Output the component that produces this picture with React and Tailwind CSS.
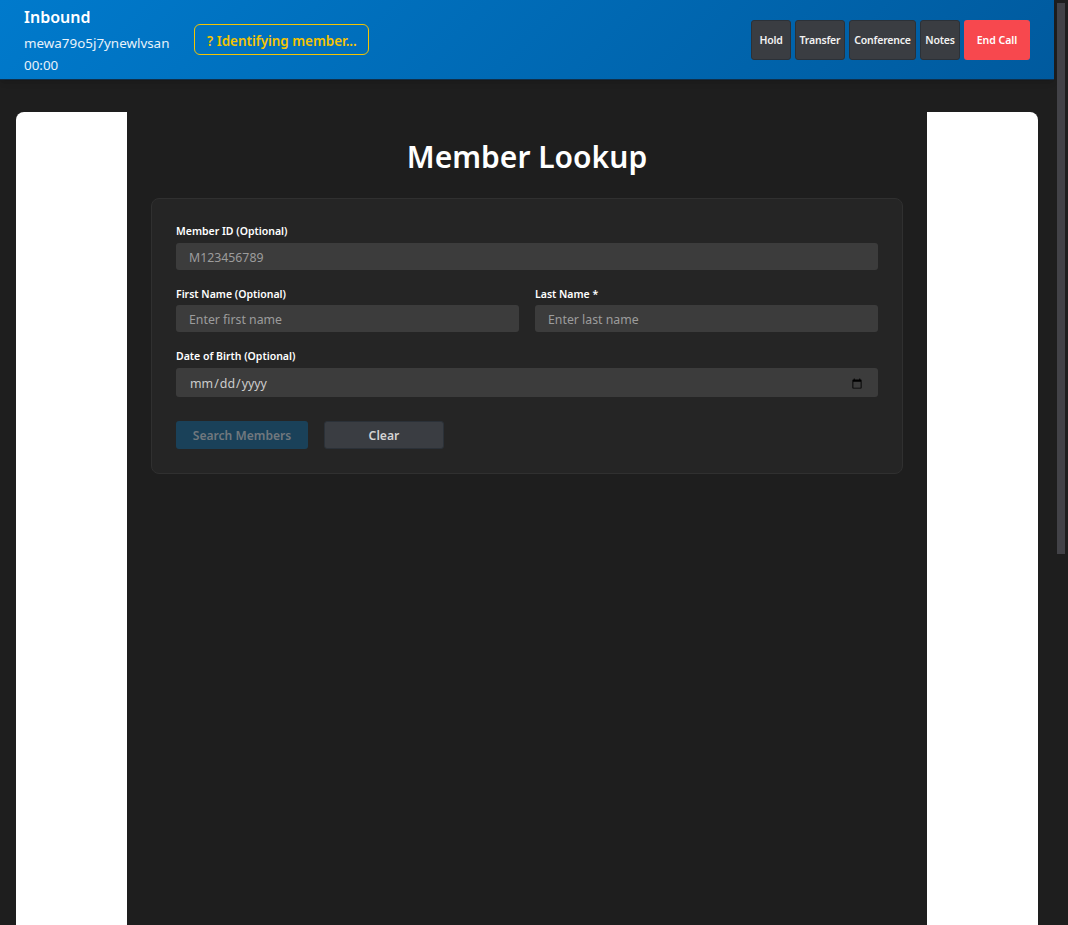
function CallButton({ children, danger, className }) {
  if (danger) {
    return (
      <button className="h-10 w-[66px] rounded-[3px] bg-[#f7484e] pt-[2px] text-[10.5px] font-semibold text-white">
        {children}
      </button>
    );
  }
  return (
    <button className={`h-10 rounded-[3px] border border-[#2b3138] bg-[#3a3d42] pt-[2px] text-[10.5px] font-semibold tracking-[-0.2px] text-[#f2f2f2] ${className}`}>
      {children}
    </button>
  );
}

function Field({ label, placeholder, labelClass = 'h-[19px] pt-px' }) {
  return (
    <div>
      <label className={`block text-[10.5px] leading-[15px] font-semibold text-white ${labelClass}`}>{label}</label>
      <input
        placeholder={placeholder}
        className="block h-[27px] w-full rounded-[3px] bg-[#3c3c3c] px-[13px] pt-px text-[12.3px] text-[#ccc] outline-none placeholder:text-[#9c9c9c]"
      />
    </div>
  );
}

function Header() {
  return (
    <header className="flex h-[80px] items-center justify-between border-b border-[#0f2f4a] bg-[linear-gradient(135deg,#007acc,#005a9e)] px-6 shadow-md">
      <div className="flex items-center gap-[25px]">
        <div className="pt-[2px] text-white">
          <div className="-mt-px text-[16px] leading-[24px] font-semibold">Inbound</div>
          <div className="mt-[3px] text-[13.4px] leading-[22px] text-[#e8f2fa]">mewa79o5j7ynewlvsan</div>
          <div className="text-[13.4px] leading-[22px] text-[#e8f2fa]">00:00</div>
        </div>
        <div className="flex h-[31px] w-[175px] items-center justify-center rounded-md border border-[#f5c400] pt-[3px] text-[13.4px] font-semibold text-[#f5c400]">
          ? Identifying member...
        </div>
      </div>
      <div className="flex gap-1">
        <CallButton className="w-10">Hold</CallButton>
        <CallButton className="w-[50px]">Transfer</CallButton>
        <CallButton className="w-[67px]">Conference</CallButton>
        <CallButton className="w-10">Notes</CallButton>
        <CallButton danger>End Call</CallButton>
      </div>
    </header>
  );
}

function LookupForm() {
  return (
    <div className="rounded-lg border border-[#303030] bg-[#252525] px-6 pt-6 pb-6">
      <Field label="Member ID (Optional)" placeholder="M123456789" labelClass="h-5 pt-px" />
      <div className="mt-4 grid grid-cols-2 gap-4">
        <Field label="First Name (Optional)" placeholder="Enter first name" />
        <Field label="Last Name *" placeholder="Enter last name" />
      </div>
      <div className="mt-4">
        <label className="block h-[20px] pt-px text-[10.5px] leading-[15px] font-semibold text-white">Date of Birth (Optional)</label>
        <input
          type="date"
          className="block h-[29px] w-full rounded-[3px] bg-[#3c3c3c] px-[13px] pt-[3px] text-[12.4px] text-[#ccc] outline-none"
        />
      </div>
      <div className="mt-6 flex gap-4">
        <button className="h-[28px] w-[132px] rounded-[3px] bg-[#1a4159] pt-[2px] text-[12.1px] font-semibold text-[#71787e]">
          Search Members
        </button>
        <button className="h-[28px] w-[120px] rounded-[3px] border border-[#2b3138] bg-[#3a3d42] pt-[2px] text-[12.2px] font-semibold text-[#d4d4d4]">
          Clear
        </button>
      </div>
    </div>
  );
}

export default function App() {
  return (
    <div className="flex h-[925px] overflow-hidden bg-[#1e1e1e] font-['Noto_Sans',sans-serif]">
      <div className="w-[1054px]">
        <Header />
        <main className="mx-4 mt-8 h-[900px] rounded-t-lg bg-white">
          <div className="mx-auto h-full w-[800px] bg-[#1e1e1e] px-6 pt-6">
            <h1 className="mb-5 text-center text-[30px] leading-[42px] font-semibold text-white">Member Lookup</h1>
            <LookupForm />
          </div>
        </main>
      </div>
      <div className="w-[14px] pt-[3px] pl-[3px]">
        <div className="h-[551px] w-[8px] bg-[#424247]" />
      </div>
    </div>
  );
}
